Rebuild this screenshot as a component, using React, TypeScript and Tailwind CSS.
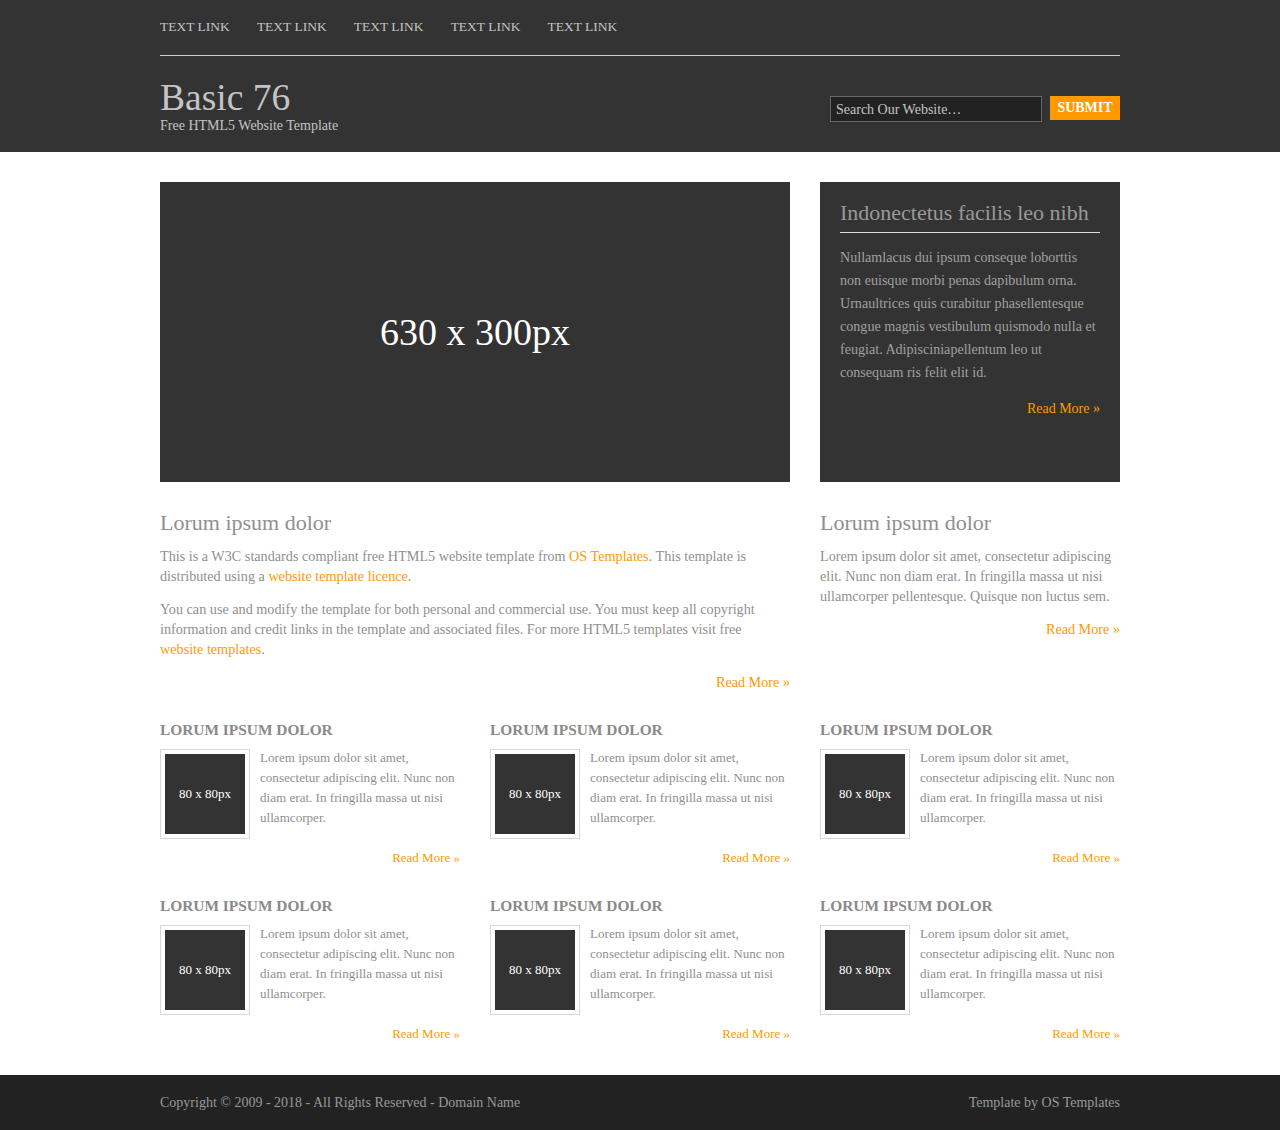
import React from "react";

const serif = { fontFamily: '"Liberation Serif", "Times New Roman", serif' };

function ReadMore({ className = "" }: { className?: string }) {
  return (
    <p className={"text-right text-[#FF9900] " + className}>
      <a href="#">Read More &raquo;</a>
    </p>
  );
}

function Block() {
  return (
    <div className="w-[300px]">
      <h2 className="text-[15.4px] font-bold uppercase text-[#8a8a8a] leading-[20px] mb-[9px]">Lorum ipsum dolor</h2>
      <div className="flex">
        <div className="w-[90px] h-[90px] border border-[#d7d7d7] p-[4px] shrink-0">
          <div className="w-[80px] h-[80px] bg-[#333333] text-white text-[13px] flex items-center justify-center">80 x 80px</div>
        </div>
        <p className="ml-[10px] text-[13.1px] leading-[20px] text-[#8f8f8f] -mt-[1px]">
          Lorem ipsum dolor sit amet, consectetur adipiscing elit. Nunc non diam erat. In fringilla massa ut nisi ullamcorper.
        </p>
      </div>
      <ReadMore className="text-[13px] leading-[20px] mt-[9px]" />
    </div>
  );
}

export default function App() {
  return (
    <div style={serif} className="bg-white min-h-[1130px] flex flex-col">
      <header className="bg-[#333333]">
        <div className="w-[960px] mx-auto">
          <nav className="h-[56px] border-b border-[#d0d0d0] flex items-center gap-[27px] text-[13.5px] text-[#c4c4c4] uppercase pb-[1px]">
            <a href="#">Text Link</a>
            <a href="#">Text Link</a>
            <a href="#">Text Link</a>
            <a href="#">Text Link</a>
            <a href="#">Text Link</a>
          </nav>
          <div className="h-[96px] flex items-center justify-between">
            <div className="pt-[5px]">
              <h1 className="text-[37.5px] leading-[38px] text-[#c4c4c4]">Basic 76</h1>
              <p className="text-[14px] leading-[18px] text-[#c4c4c4]">Free HTML5 Website Template</p>
            </div>
            <div className="flex items-start gap-[8px] pt-[10px]">
              <div className="w-[212px] h-[26px] border border-[#666666] bg-[#222222] text-[14px] text-[#c4c4c4] px-[5px] flex items-center">Search Our Website&hellip;</div>
              <button className="w-[70px] h-[24px] bg-[#FF9900] text-white text-[14px] font-bold uppercase leading-[24px]">Submit</button>
            </div>
          </div>
        </div>
      </header>

      <main className="w-[960px] mx-auto pt-[30px] flex-1">
        <div className="flex gap-[30px]">
          <div className="w-[630px] h-[300px] bg-[#333333] text-white text-[38px] flex items-center justify-center">630 x 300px</div>
          <div className="w-[300px] h-[300px] bg-[#333333] px-[20px] pt-[17px]">
            <h2 className="text-[22px] leading-[28px] text-[#999999] border-b border-[#dddddd] pb-[5px] mb-[13px]">Indonectetus facilis leo nibh</h2>
            <p className="text-[14.1px] leading-[23px] text-[#a0a0a0]">
              Nullamlacus dui ipsum conseque loborttis non euisque morbi penas dapibulum orna. Urnaultrices quis curabitur phasellentesque congue magnis vestibulum quismodo nulla et feugiat. Adipisciniapellentum leo ut consequam ris felit elit id.
            </p>
            <ReadMore className="text-[14px] leading-[20px] mt-[15px]" />
          </div>
        </div>

        <div className="flex gap-[30px] mt-[28px]">
          <div className="w-[630px] text-[14.2px] leading-[20px] text-[#8f8f8f]">
            <h2 className="text-[22px] leading-[26px] text-[#8f8f8f] mb-[10px]">Lorum ipsum dolor</h2>
            <p className="mb-[13px]">
              This is a W3C standards compliant free HTML5 website template from <a href="#" className="text-[#FF9900]">OS Templates</a>. This template is distributed using a <a href="#" className="text-[#FF9900]">website template licence</a>.
            </p>
            <p className="mb-[13px]">
              You can use and modify the template for both personal and commercial use. You must keep all copyright information and credit links in the template and associated files. For more HTML5 templates visit free <a href="#" className="text-[#FF9900] whitespace-nowrap">website templates</a>.
            </p>
            <ReadMore />
          </div>
          <div className="w-[300px] text-[14.2px] leading-[20px] text-[#8f8f8f]">
            <h2 className="text-[22px] leading-[26px] text-[#8f8f8f] mb-[10px]">Lorum ipsum dolor</h2>
            <p className="mb-[13px]">
              Lorem ipsum dolor sit amet, consectetur adipiscing elit. Nunc non diam erat. In fringilla massa ut nisi ullamcorper pellentesque. Quisque non luctus sem.
            </p>
            <ReadMore />
          </div>
        </div>

        <div className="grid grid-cols-3 gap-x-[30px] gap-y-[28px] mt-[28px] pb-[30px]">
          <Block />
          <Block />
          <Block />
          <Block />
          <Block />
          <Block />
        </div>
      </main>

      <footer className="bg-[#222222] h-[55px]">
        <div className="w-[960px] mx-auto h-full flex items-center justify-between text-[14px] text-[#999999]">
          <p>Copyright &copy; 2009 - 2018 - All Rights Reserved - <a href="#">Domain Name</a></p>
          <p>Template by <a href="#">OS Templates</a></p>
        </div>
      </footer>
    </div>
  );
}
